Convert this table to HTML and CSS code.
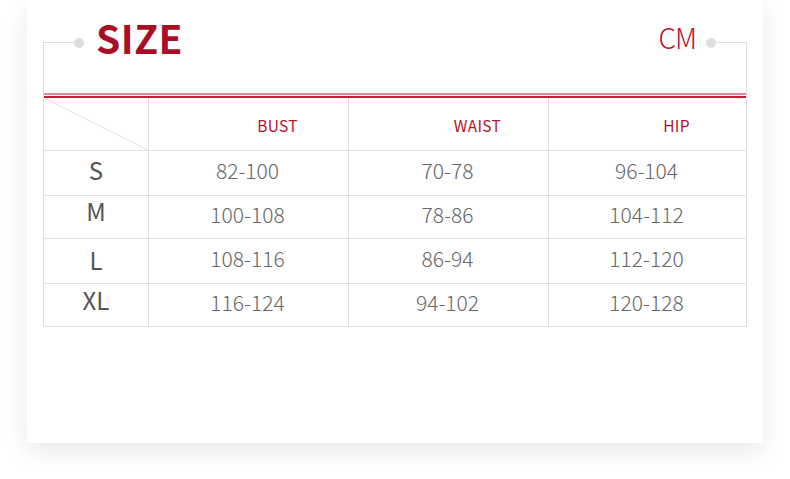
FILE: index.html
```html
<!DOCTYPE html>
<html>
<head>
<meta charset="utf-8">
<link rel="stylesheet" href="styles.css">
</head>
<body>
<div class="card">
  <div class="frame">
    <div class="title-row">
      <span class="seg seg-left"></span>
      <span class="dot"></span>
      <span class="size-title">SIZE</span>
      <span class="spacer"></span>
      <span class="unit">CM</span>
      <span class="dot dot-right"></span>
      <span class="seg seg-right"></span>
    </div>
    <div class="double-line"></div>
    <div class="table">
      <div class="cell head corner">
        <svg class="diag" viewBox="0 0 100 100" preserveAspectRatio="none"><line x1="0" y1="0" x2="100" y2="100" stroke="#dedede" stroke-width="1" vector-effect="non-scaling-stroke"/></svg>
      </div>
      <div class="cell head col-label">BUST</div>
      <div class="cell head col-label">WAIST</div>
      <div class="cell head col-label last">HIP</div>

      <div class="cell r1 sz">S</div>
      <div class="cell r1 num">82-100</div>
      <div class="cell r1 num">70-78</div>
      <div class="cell r1 num last">96-104</div>

      <div class="cell r2 sz up">M</div>
      <div class="cell r2 num">100-108</div>
      <div class="cell r2 num">78-86</div>
      <div class="cell r2 num last">104-112</div>

      <div class="cell r3 sz mid">L</div>
      <div class="cell r3 num">108-116</div>
      <div class="cell r3 num">86-94</div>
      <div class="cell r3 num last">112-120</div>

      <div class="cell r4 sz up2">XL</div>
      <div class="cell r4 num">116-124</div>
      <div class="cell r4 num">94-102</div>
      <div class="cell r4 num last">120-128</div>
    </div>
  </div>
</div>
</body>
</html>
```

FILE: styles.css
```css
html, body {
  margin: 0;
  padding: 0;
  background: #ffffff;
}
body {
  width: 790px;
  height: 479px;
  overflow: hidden;
  font-family: "Noto Sans CJK SC", "Noto Sans", sans-serif;
}
.card {
  box-sizing: border-box;
  margin-left: 27px;
  width: 736px;
  height: 443px;
  padding: 42px 16px 0 16px;
  background: #ffffff;
  box-shadow: 0 8px 24px rgba(0, 0, 0, 0.09);
}
.frame {
  border-left: 1px solid #dcdcdc;
  border-right: 1px solid #dcdcdc;
  width: 704px;
  box-sizing: border-box;
}
.title-row {
  display: flex;
  align-items: center;
  height: 1px;
  margin-left: -1px;
  margin-right: -1px;
}
.seg {
  height: 1px;
  background: #dcdcdc;
  flex: none;
}
.seg-left {
  width: 31px;
}
.seg-right {
  width: 31px;
}
.dot {
  flex: none;
  width: 10px;
  height: 10px;
  border-radius: 50%;
  background: #dddddd;
  margin-right: 12px;
}
.dot-right {
  margin-right: 0;
  margin-left: 10px;
}
.size-title {
  flex: none;
  font-size: 39px;
  font-weight: 700;
  color: #a80f26;
  letter-spacing: 0.5px;
  line-height: 1;
  margin-top: -10px;
}
.spacer {
  flex: 1;
}
.unit {
  flex: none;
  font-size: 28px;
  font-weight: 300;
  color: #b5162e;
  line-height: 1;
  margin-top: -12px;
  letter-spacing: -1px;
}
.double-line {
  margin-top: 50px;
  height: 1px;
  border-top: 2px solid #e38a94;
  border-bottom: 2px solid #c41d32;
}
.table {
  display: grid;
  grid-template-columns: 105px 200px 200px 1fr;
  grid-template-rows: 53px 45px 43px 45px 43px;
}
.cell {
  box-sizing: border-box;
  border-right: 1px solid #e0e0e0;
  border-bottom: 1px solid #e0e0e0;
  display: flex;
  align-items: center;
  justify-content: center;
}
.cell.last {
  border-right: none;
}
.corner {
  position: relative;
}
.diag {
  position: absolute;
  left: 0;
  top: 0;
  width: 100%;
  height: 100%;
}
.col-label {
  font-size: 15.5px;
  color: #b5142d;
  padding-left: 58px;
  padding-top: 1px;
  letter-spacing: 0.3px;
}
.sz {
  font-size: 24px;
  color: #555555;
  font-weight: 400;
  padding-bottom: 8px;
}
.sz.up {
  padding-bottom: 14px;
}
.sz.mid {
  padding-bottom: 4px;
}
.sz.up2 {
  padding-bottom: 12px;
}
.num {
  font-size: 21px;
  color: #666666;
  font-weight: 300;
  padding-bottom: 6px;
  padding-right: 2px;
}
```
